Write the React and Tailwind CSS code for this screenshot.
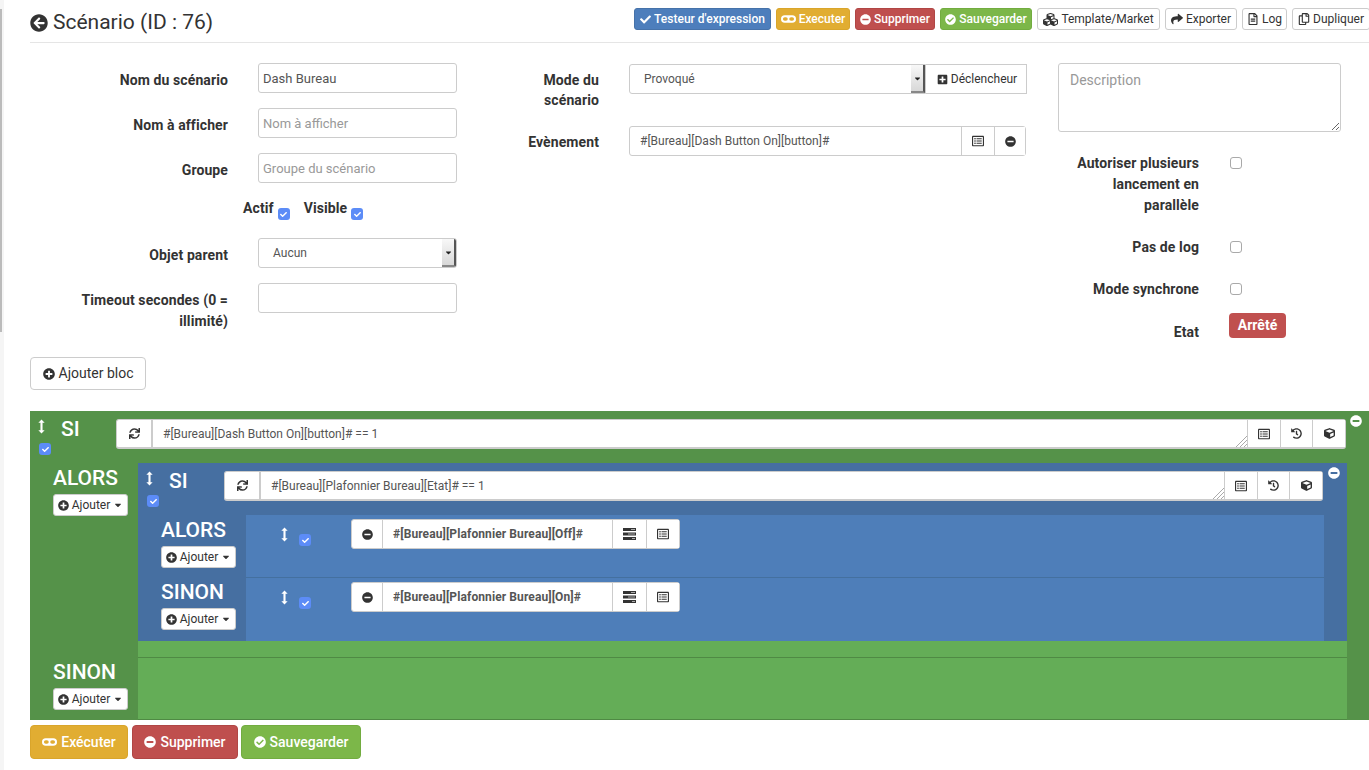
import React from "react";
import {
  FaArrowCircleLeft, FaCheck, FaMinusCircle, FaCheckCircle, FaCubes, FaShare, FaRegFileAlt, FaRegCopy,
  FaPlusSquare, FaRegListAlt, FaHistory, FaCube, FaSync, FaPlusCircle, FaCaretDown,
} from "react-icons/fa";

const Glasses = ({ size = 12 }) => (
  <svg width={size * 1.25} height={size} viewBox="0 0 20 16" fill="currentColor">
    <path fillRule="evenodd" d="M5 3h10a5 5 0 0 1 0 10H5A5 5 0 0 1 5 3Zm0 2.600a2.400 2.400 0 1 0 0 4.800h1.600a2.400 2.400 0 1 0 0-4.800Zm8.400 0a2.400 2.400 0 1 0 0 4.800H15a2.400 2.400 0 1 0 0-4.800Z" />
  </svg>
);

const Tasks = () => (
  <svg width="13" height="12" viewBox="0 0 13 12">
    <path fill="#333" d="M0 0h13v3H0ZM0 4.500h13v3H0ZM0 9h13v3H0Z" />
    <path fill="#aaa" d="M8 1h4v1H8ZM5 5.500h7v1H5ZM9 10h3v1H9Z" />
  </svg>
);

const Arrows = () => (
  <svg width="7" height="15" viewBox="0 0 8 16" fill="white">
    <path d="M4 0l3.600 3.600H5.200v8.800h2.400L4 16 .4 12.400h2.400V3.600H.4Z" />
  </svg>
);

const Check = ({ on = true }) =>
  on ? (
    <span className="inline-flex w-3 h-3 rounded-[3px] bg-[#5c8cf7] items-center justify-center text-white shrink-0">
      <FaCheck size={7} />
    </span>
  ) : (
    <span className="inline-block w-3 h-3 rounded-[3px] bg-white border border-[#a9a9a9] shrink-0" />
  );

const TopBtn = ({ className, children }) => (
  <button className={`h-[22px] rounded-[3px] border text-[12px] flex items-center justify-center gap-[3px] whitespace-nowrap shrink-0 [&>svg]:shrink-0 ${className}`}>
    {children}
  </button>
);

const Label = ({ w, className = "", children }) => (
  <label className={`block text-right font-bold text-[14px] leading-[21px] tracking-[0.1px] text-[#333] shrink-0 ${className}`} style={{ width: w }}>
    {children}
  </label>
);

const field =
  "block w-[199px] h-[30px] border border-[#ccc] rounded-[3px] px-[4px] pt-[1px] text-[13px] text-[#555] placeholder:text-[#999] bg-white outline-none";

const FormRow = ({ label, children, className = "mb-[15px]" }) => (
  <div className={`flex gap-[30px] ${className}`}>
    <Label w={198} className="pt-[7px]">{label}</Label>
    {children}
  </div>
);

const Select = ({ width, text, className = "" }) => (
  <div className={`h-[30px] flex items-stretch bg-white border border-[#ccc] overflow-hidden ${className}`} style={{ width }}>
    <span className="flex-1 pl-[14px] text-[12px] leading-[29px] text-[#555]">{text}</span>
    <span className="w-[14px] flex items-center justify-center bg-gradient-to-b from-[#f8f8f8] to-[#d8d8d8] border-r-2 border-b-2 border-r-[#555] border-b-[#888] text-[#222]">
      <FaCaretDown size={9} />
    </span>
  </div>
);

const AddBtn = ({ className = "" }) => (
  <button className={`w-[75px] h-[22px] bg-white border border-[#ccc] rounded-[3px] text-[12px] text-[#333] flex items-center justify-center gap-[3px] [&>svg]:shrink-0 ${className}`}>
    <FaPlusCircle size={11} />
    <span>Ajouter</span>
    <FaCaretDown size={10} />
  </button>
);

const Cell = ({ w, className = "", children }) => (
  <span className={`flex items-center justify-center text-[#333] shrink-0 border-l border-[#ccc] bg-white ${className}`} style={{ width: w }}>
    {children}
  </span>
);

const BlockHead = ({ value, mr }) => (
  <div className="relative flex h-[52px] pt-2 pl-[8px]">
    <div className="w-[23px] shrink-0 flex flex-col items-start gap-[8px]">
      <span className="h-[16px] flex -ml-[0.5px]"><Arrows /></span>
      <span className="pl-[1px] flex"><Check /></span>
    </div>
    <span className="text-[21px] leading-[20px] font-medium text-white w-[55px] shrink-0">SI</span>
    <div className="flex-1 flex h-[30px] border border-[#ccc] border-b-2 rounded-[3px] bg-white min-w-0" style={{ marginRight: mr }}>
      <span className="w-[34px] shrink-0 flex items-center justify-center text-[#333]"><FaSync size={11} /></span>
      <div className="relative flex-1 border-l-2 border-[#ccc] pl-[10px] text-[12px] leading-[29px] text-[#555] whitespace-nowrap">
        {value}
        <svg className="absolute right-0 bottom-0" width="12" height="12" viewBox="0 0 12 12" stroke="#aaa" fill="none">
          <path d="M1 12L12 1M5 12L12 5M9 12L12 9" />
        </svg>
      </div>
      <Cell w={33}><FaRegListAlt size={12} /></Cell>
      <Cell w={32}><FaHistory size={11} /></Cell>
      <Cell w={33}><FaCube size={11} /></Cell>
    </div>
    <span className="absolute right-[7px] top-1 text-white"><FaMinusCircle size={12} /></span>
  </div>
);

const ActionRow = ({ text, border }) => (
  <div className={`h-[63px] flex pt-[4px] pl-[35px] ${border ? "border-b border-[#44709f]" : ""}`}>
    <span className="w-[18px] shrink-0 mt-[8px]"><Arrows /></span>
    <span className="w-[52px] shrink-0 mt-[15px] flex"><Check /></span>
    <div className="flex h-[30px] w-[329px] bg-white border border-[#ccc] rounded-[3px]">
      <span className="w-[30px] shrink-0 flex items-center justify-center text-[#333]"><FaMinusCircle size={11} /></span>
      <span className="flex-1 border-l border-[#ccc] pl-[10px] text-[12px] font-bold leading-[28px] tracking-[0.1px] text-[#555] whitespace-nowrap">{text}</span>
      <Cell w={34}><Tasks /></Cell>
      <Cell w={33}><FaRegListAlt size={12} /></Cell>
    </div>
  </div>
);

const SideTitle = ({ title, topGap }) => (
  <div className="pl-[23px]" style={{ paddingTop: topGap }}>
    <div className="text-[21px] leading-[26px] font-medium text-white mb-[3px]">{title}</div>
    <AddBtn />
  </div>
);

const BigBtn = ({ className, children }) => (
  <button className={`h-[34px] rounded-[4px] border text-white text-[14px] font-medium flex items-center justify-center gap-[4px] [&>svg]:shrink-0 ${className}`}>
    {children}
  </button>
);

export default function App() {
  return (
    <div className="w-[1369px] h-[770px] overflow-hidden flex bg-white text-[#333]" style={{ fontFamily: "Roboto, 'Noto Sans', sans-serif" }}>
      <aside className="w-[4px] shrink-0 bg-[#f5f5f5] pt-[9px]">
        <div className="w-[2px] h-[323px] bg-[#bbb]" />
      </aside>
      <main className="flex-1 pl-[26px] min-w-0">
        <header className="h-[43px] border-b border-[#e5e5e5] flex items-center justify-between">
          <h1 className="flex items-center gap-[5px] text-[21px] font-normal text-[#333] pt-[3px]">
            <FaArrowCircleLeft size={18} />
            <span>Scénario (ID : 76)</span>
          </h1>
          <div className="flex gap-[5px] -mr-[1px] mb-[4px]">
            <TopBtn className="bg-[#4d7ebc] border-[#4672a9] text-white font-medium w-[137px]"><FaCheck size={11} />Testeur d'expression</TopBtn>
            <TopBtn className="bg-[#e1ad32] border-[#d9a52b] text-white font-medium w-[74px]"><Glasses />Executer</TopBtn>
            <TopBtn className="bg-[#bf4f4e] border-[#b04645] text-white font-medium w-[80px]"><FaMinusCircle size={11} />Supprimer</TopBtn>
            <TopBtn className="bg-[#7cb749] border-[#72ac40] text-white font-medium w-[92px]"><FaCheckCircle size={11} />Sauvegarder</TopBtn>
            <TopBtn className="bg-white border-[#ccc] text-[#333] w-[123px]"><FaCubes size={15} />Template/Market</TopBtn>
            <TopBtn className="bg-white border-[#ccc] text-[#333] w-[72px]"><FaShare size={12} />Exporter</TopBtn>
            <TopBtn className="bg-white border-[#ccc] text-[#333] w-[45px]"><FaRegFileAlt size={12} />Log</TopBtn>
            <TopBtn className="bg-white border-[#ccc] text-[#333] w-[78px]"><FaRegCopy size={12} />Dupliquer</TopBtn>
          </div>
        </header>

        <section className="flex pt-5 mb-[19px]">
          <div className="w-[427px] shrink-0">
            <FormRow label="Nom du scénario"><input readOnly className={field} value="Dash Bureau" /></FormRow>
            <FormRow label="Nom à afficher"><input readOnly className={field} placeholder="Nom à afficher" /></FormRow>
            <FormRow label="Groupe"><input readOnly className={field} placeholder="Groupe du scénario" /></FormRow>
            <div className="h-[25px] mb-[15px] flex pl-[213px] text-[14px] font-bold tracking-[0.1px] text-[#333] leading-[20px]">
              <span>Actif</span>
              <span className="ml-[4px] mt-[10px] mr-[14px] flex h-3"><Check /></span>
              <span>Visible</span>
              <span className="ml-[4px] mt-[10px] flex h-3"><Check /></span>
            </div>
            <FormRow label="Objet parent">
              <Select width={199} text="Aucun" className="rounded-[3px]" />
            </FormRow>
            <FormRow label={<>Timeout secondes (0 =<br />illimité)</>} className=""><input readOnly className={field} /></FormRow>
          </div>

          <div className="w-[569px] shrink-0 mt-[1px]">
            <div className="flex gap-[30px] h-[62px]">
              <Label w={142} className="pt-[6px] !leading-[20px]">Mode du<br />scénario</Label>
              <div className="flex h-[30px]">
                <Select width={297} text="Provoqué" className="rounded-l-[3px]" />
                <button className="w-[101px] h-[30px] pl-[2px] border border-l-0 border-[#ccc] bg-white text-[12px] text-[#333] flex items-center justify-center gap-[3px]">
                  <FaPlusSquare size={11} />Déclencheur
                </button>
              </div>
            </div>
            <div className="flex gap-[30px]">
              <Label w={142} className="pt-[6px]">Evènement</Label>
              <div className="flex h-[30px] w-[398px] border border-[#ccc] rounded-[3px] bg-white">
                <span className="flex-1 pl-[10px] text-[12px] leading-[28px] text-[#555]">#[Bureau][Dash Button On][button]#</span>
                <Cell w={33}><FaRegListAlt size={12} /></Cell>
                <Cell w={31}><FaMinusCircle size={11} /></Cell>
              </div>
            </div>
          </div>

          <div className="ml-[32px] w-[283px] shrink-0">
            <textarea readOnly placeholder="Description" className="block w-[283px] h-[69px] border border-[#ccc] rounded-[3px] px-[11px] py-[6px] text-[14px] leading-[20px] placeholder:text-[#999] outline-none mb-[21px]" />
            <div className="flex h-[63px]">
              <Label w={141}>Autoriser plusieurs lancement en parallèle</Label>
              <span className="ml-[31px] mt-[4px] flex h-3"><Check on={false} /></span>
            </div>
            <div className="flex h-[21px] mt-[21px]">
              <Label w={141}>Pas de log</Label>
              <span className="ml-[31px] mt-[4px] flex h-3"><Check on={false} /></span>
            </div>
            <div className="flex h-[21px] mt-[21px]">
              <Label w={141}>Mode synchrone</Label>
              <span className="ml-[31px] mt-[4px] flex h-3"><Check on={false} /></span>
            </div>
            <div className="flex h-[25px] mt-[13px]">
              <Label w={141} className="pt-[9px]">Etat</Label>
              <span className="ml-[30px] w-[57px] h-[25px] rounded-[4px] bg-[#c0504f] text-white text-[14px] font-bold flex items-center justify-center">Arrêté</span>
            </div>
          </div>
        </section>

        <button className="w-[116px] h-[33px] border border-[#ccc] rounded-[4px] bg-white text-[14px] text-[#333] flex items-center justify-center gap-[4px] mb-[21px]">
          <FaPlusCircle size={12} />Ajouter bloc
        </button>

        <div className="h-[309px] bg-[#559249]">
          <BlockHead value="#[Bureau][Dash Button On][button]# == 1" mr={23} />
          <div className="flex pr-[22px]">
            <div className="w-[108px] shrink-0">
              <SideTitle title="ALORS" topGap={2} />
            </div>
            <div className="flex-1 bg-[#64ad57] border-b border-[#4f8a44] h-[195px]">
              <div className="h-[178px] bg-[#466fa1]">
                <BlockHead value="#[Bureau][Plafonnier Bureau][Etat]# == 1" mr={24} />
                <div className="flex pr-[23px]">
                  <div className="w-[108px] shrink-0">
                    <div className="h-[63px]"><SideTitle title="ALORS" topGap={2} /></div>
                    <div className="h-[63px]"><SideTitle title="SINON" topGap={1} /></div>
                  </div>
                  <div className="flex-1 bg-[#4e7eb9]">
                    <ActionRow text="#[Bureau][Plafonnier Bureau][Off]#" border />
                    <ActionRow text="#[Bureau][Plafonnier Bureau][On]#" />
                  </div>
                </div>
              </div>
            </div>
          </div>
          <div className="flex pr-[22px] h-[62px]">
            <div className="w-[108px] shrink-0">
              <SideTitle title="SINON" topGap={1} />
            </div>
            <div className="flex-1 bg-[#64ad57] border-b border-[#4f8a44]" />
          </div>
        </div>

        <div className="flex gap-[4px] mt-[5px]">
          <BigBtn className="w-[98px] bg-[#e1ad32] border-[#d9a52b]"><Glasses size={12} />Exécuter</BigBtn>
          <BigBtn className="w-[106px] bg-[#bf4f4e] border-[#b04645]"><FaMinusCircle size={12} />Supprimer</BigBtn>
          <BigBtn className="w-[120px] -ml-[1px] bg-[#7cb749] border-[#72ac40]"><FaCheckCircle size={12} />Sauvegarder</BigBtn>
        </div>
      </main>
    </div>
  );
}
